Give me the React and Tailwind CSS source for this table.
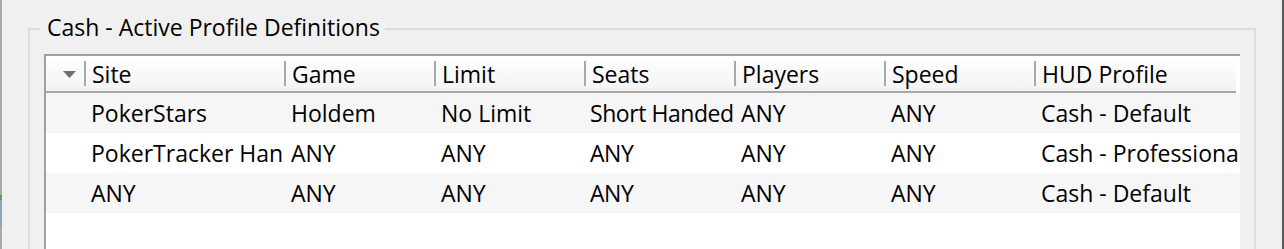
const columns = ["Site", "Game", "Limit", "Seats", "Players", "Speed", "HUD Profile"];

const rows = [
  ["PokerStars", "Holdem", "No Limit", "Short Handed", "ANY", "ANY", "Cash - Default"],
  ["PokerTracker Hand Histories", "ANY", "ANY", "ANY", "ANY", "ANY", "Cash - Professional"],
  ["ANY", "ANY", "ANY", "ANY", "ANY", "ANY", "Cash - Default"],
];

const grid = "grid grid-cols-[38px_200px_150px_150px_150px_150px_150px_1fr]";

function SortArrow() {
  return (
    <svg width="13" height="7" viewBox="0 0 13 7" className="ml-[17px] mt-[2px]">
      <path d="M0 0 H13 L6.5 7 Z" fill="#707070" />
    </svg>
  );
}

function HeaderRow() {
  return (
    <div className={`${grid} h-[37px] bg-linear-to-b from-white to-[#f3f3f3] border-b-2 border-[#a8a8a8] mr-[4px]`}>
      <div className="flex items-center">
        <SortArrow />
      </div>
      {columns.map((c) => (
        <div key={c} className="flex items-center overflow-hidden whitespace-nowrap">
          <div className="w-[2px] h-[25px] bg-[#a8a8a8] shrink-0" />
          <span className="ml-[6px]">{c}</span>
        </div>
      ))}
    </div>
  );
}

function DataRow({ cells, shaded }) {
  return (
    <div className={`${grid} h-[40px] ${shaded ? "bg-[#f6f6f6]" : "bg-white"}`}>
      <div />
      {cells.map((c, i) => (
        <div
          key={i}
          className={
            i === 3
              ? "flex items-center overflow-hidden whitespace-nowrap pl-[6px] tracking-[-0.45px]"
              : "flex items-center overflow-hidden whitespace-nowrap pl-[7px]"
          }
        >
          {c}
        </div>
      ))}
    </div>
  );
}

export default function App() {
  return (
    <div className="w-[1284px] h-[249px] bg-[#f0f0f0] overflow-hidden flex font-['Open_Sans',sans-serif] text-[23px] text-black leading-[28px]">
      <div className="w-[2px] h-full flex flex-col shrink-0">
        <div className="h-[195px] bg-[#a9a9a9]" />
        <div className="h-[5px] bg-[#6a9a50]" />
        <div className="h-[28px] bg-[#8aaab8]" />
        <div className="flex-1 bg-[#a9a9a9]" />
      </div>

      <div className="flex-1 pl-[26px] pt-[13px]">
        <fieldset className="w-[1228px] h-[280px] border-2 border-[#dcdcdc] p-0 m-0">
          <legend className="ml-[10px] pl-[7px] pr-[5px] pb-[4px] leading-[28px]">
            Cash - Active Profile Definitions
          </legend>
          <div className="ml-[14px] mt-[9px] w-[1196px] h-[240px] bg-white border-l-2 border-t-2 border-[#a0a0a0] overflow-hidden">
            <HeaderRow />
            {rows.map((r, i) => (
              <DataRow key={i} cells={r} shaded={i % 2 === 0} />
            ))}
          </div>
        </fieldset>
      </div>

      <div className="w-[2px] h-full bg-[#5a5a5a] shrink-0" />
    </div>
  );
}
